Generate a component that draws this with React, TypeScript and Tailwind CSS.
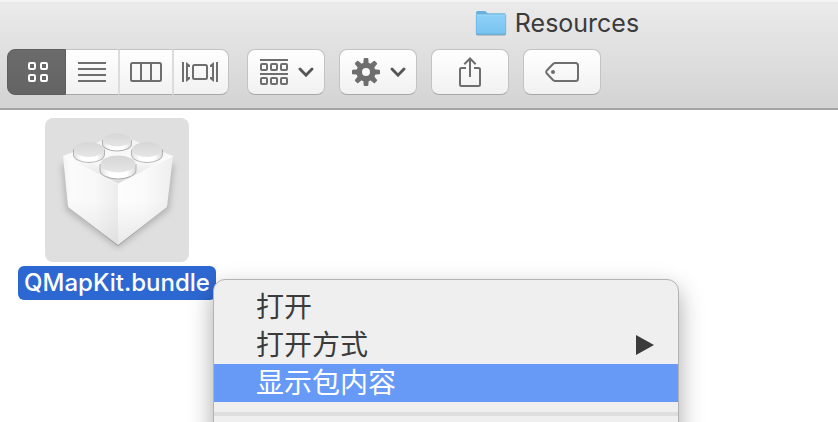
import type { ReactNode } from 'react'
import clsx from 'clsx'

const GRAY = '#6e6e6e'

function FolderIcon() {
  return (
    <svg width="32" height="26" viewBox="0 0 32 26" aria-hidden="true">
      <defs>
        <linearGradient id="folder" x1="0" y1="0" x2="0" y2="1">
          <stop offset="0" stopColor="#8dd0f8" />
          <stop offset="1" stopColor="#79c3f1" />
        </linearGradient>
      </defs>
      <path d="M2 25.200H30" stroke="#a9b4bb" />
      <path d="M1 2.500Q1 1 2.500 1H9.500Q10.500 1 11.200 1.800L12 2.800Q12.500 3.300 13.500 3.300H29.500Q31 3.300 31 4.800V24.500H1Z" fill="#68b1de" />
      <path d="M1 5.200H31V24H1Z" fill="url(#folder)" />
      <path d="M1 5H31" stroke="#a5def9" />
      <path d="M1 24.200H31" stroke="#5ba5d2" />
      <path d="M1.300 5V24M30.700 5V24" stroke="#67b4e2" strokeWidth=".7" />
    </svg>
  )
}

function GridIcon() {
  return (
    <svg width="20" height="20" viewBox="0 0 20 20" fill="none" stroke="#fff" strokeWidth="2" aria-hidden="true">
      {[1, 13].map(y => [1, 13].map(x => <rect key={`${x}-${y}`} x={x} y={y} width="6" height="6" rx="1.200" />))}
    </svg>
  )
}

function ListIcon() {
  return (
    <svg width="28" height="20" viewBox="0 0 28 20" stroke={GRAY} strokeWidth="2" aria-hidden="true">
      <path d="M0 1H28M0 7H28M0 13H28M0 19H28" />
    </svg>
  )
}

function ColumnsIcon() {
  return (
    <svg width="32" height="20" viewBox="0 0 32 20" fill="none" stroke={GRAY} strokeWidth="2" aria-hidden="true">
      <rect x="1" y="1" width="30" height="18" rx="1.500" />
      <path d="M11 1V19M21 1V19" />
    </svg>
  )
}

function CoverFlowIcon() {
  return (
    <svg width="36" height="20" viewBox="0 0 36 20" fill="none" stroke={GRAY} strokeWidth="2" aria-hidden="true">
      <path d="M1 0V20M35 0V20" />
      <rect x="11" y="3" width="14" height="14" rx="1.500" />
      <path d="M4 0L8 3V5H6V15H8V17L4 20ZM32 0L28 3V5H30V15H28V17L32 20Z" fill={GRAY} stroke="none" />
    </svg>
  )
}

function ArrangeIcon() {
  return (
    <svg width="28" height="26" viewBox="0 0 28 26" fill="none" stroke={GRAY} strokeWidth="2" aria-hidden="true">
      <path d="M0 1H28M0 15H28" />
      {[5, 19].map(y => [1, 11, 21].map(x => <rect key={`${x}-${y}`} x={x} y={y} width="6" height="6" rx="1" />))}
    </svg>
  )
}

function GearIcon() {
  return (
    <svg width="28" height="28" viewBox="0 0 28 28" aria-hidden="true">
      {[0, 45, 90, 135, 180, 225, 270, 315].map(a => (
        <path key={a} d="M11.200 7L11.700 .8Q11.800 0 12.600 0H15.400Q16.200 0 16.300 .8L16.800 7Z" fill={GRAY} transform={`rotate(${a} 14 14)`} />
      ))}
      <circle cx="14" cy="14" r="6.800" fill="none" stroke={GRAY} strokeWidth="5.600" />
    </svg>
  )
}

function ChevronIcon() {
  return (
    <svg width="16" height="10" viewBox="0 0 16 10" fill="none" stroke="#555" strokeWidth="2.800" strokeLinecap="round" aria-hidden="true">
      <path d="M2 2L8 8.200L14 2" />
    </svg>
  )
}

function ShareIcon() {
  return (
    <svg width="22" height="30" viewBox="0 0 22 30" fill="none" stroke={GRAY} strokeWidth="2" aria-hidden="true">
      <path d="M7 11H2.500Q1 11 1 12.500V27.500Q1 29 2.500 29H19.500Q21 29 21 27.500V12.500Q21 11 19.500 11H15" />
      <path d="M11 20V1.500M5.300 7.300L11 1.500L16.700 7.300" />
    </svg>
  )
}

function TagIcon() {
  return (
    <svg width="34" height="20" viewBox="0 0 34 20" fill="none" stroke={GRAY} strokeWidth="2" aria-hidden="true">
      <path d="M10.500 1H30.500Q33 1 33 3.500V16.500Q33 19 30.500 19H10.500Q9 19 8 18L1.800 11.500Q.6 10 1.800 8.500L8 2Q9 1 10.500 1Z" />
      <circle cx="8" cy="10" r="2" fill={GRAY} stroke="none" />
    </svg>
  )
}

function Stud({ cx, cy, rx, ry, depth }: { cx: number; cy: number; rx: number; ry: number; depth: number }) {
  const side = (grow: number, drop: number) => {
    const r = rx + grow
    return `M${cx - r} ${cy}V${cy + drop}A${r} ${ry + grow} 0 0 0 ${cx + r} ${cy + drop}V${cy}Z`
  }
  return (
    <g>
      <path d={side(1, depth)} fill="#9c9c9c" opacity=".75" filter="url(#soft)" />
      <path d={side(0, depth)} fill="url(#studSide)" />
      <ellipse cx={cx} cy={cy} rx={rx} ry={ry} fill="url(#studTop)" />
    </g>
  )
}

function BrickIcon() {
  return (
    <svg width="144" height="144" viewBox="0 0 144 144" aria-hidden="true">
      <defs>
        <filter id="soft" x="-20%" y="-20%" width="140%" height="140%"><feGaussianBlur stdDeviation=".6" /></filter>
        <filter id="shade" x="-20%" y="-20%" width="140%" height="140%"><feGaussianBlur stdDeviation="3" /></filter>
        <linearGradient id="studTop" x1="0" y1="0" x2="0" y2="1">
          <stop offset="0" stopColor="#d6d6d6" />
          <stop offset="1" stopColor="#e6e6e6" />
        </linearGradient>
        <linearGradient id="studSide">
          <stop offset="0" stopColor="#e2e2e2" />
          <stop offset=".25" stopColor="#fff" />
          <stop offset=".75" stopColor="#fff" />
          <stop offset="1" stopColor="#dcdcdc" />
        </linearGradient>
        <linearGradient id="top" x1="0" y1="0" x2="0" y2="1">
          <stop offset="0" stopColor="#f0f0f0" />
          <stop offset=".5" stopColor="#fbfbfb" />
          <stop offset="1" stopColor="#dadada" />
        </linearGradient>
        <linearGradient id="left">
          <stop offset="0" stopColor="#f3f3f3" />
          <stop offset=".15" stopColor="#fbfbfb" />
          <stop offset=".6" stopColor="#f8f8f8" />
          <stop offset="1" stopColor="#ededed" />
        </linearGradient>
        <linearGradient id="right">
          <stop offset="0" stopColor="#fdfdfd" />
          <stop offset=".5" stopColor="#fafafa" />
          <stop offset="1" stopColor="#eeeeee" />
        </linearGradient>
        <linearGradient id="foot" x1="0" y1="0" x2="0" y2="1">
          <stop offset=".5" stopColor="#d5d5d5" stopOpacity="0" />
          <stop offset="1" stopColor="#cfcfcf" stopOpacity=".45" />
        </linearGradient>
      </defs>
      <path d="M17 46L21 92L73 130L124 92L129 46Z" fill="#888" opacity=".5" filter="url(#shade)" />
      <path d="M22 88L73 128L123 88Z" fill="#777" opacity=".6" filter="url(#soft)" />
      <path d="M18 38L68 18Q73 16 78 18L128 38L73 66Z" fill="url(#top)" />
      <path d="M18 38L73 66V127L23 89Z" fill="url(#left)" />
      <path d="M128 38L73 66V127L122 89Z" fill="url(#right)" />
      <path d="M18 38L73 66L128 38L122 89L73 127L23 89Z" fill="url(#foot)" />
      <path d="M18 38L73 66L128 38" fill="none" stroke="#fff" strokeWidth=".8" />
      <Stud cx={72} cy={22} rx={14} ry={6.5} depth={4} />
      <Stud cx={44} cy={31.5} rx={15} ry={7.5} depth={5} />
      <Stud cx={102} cy={31.5} rx={15} ry={7.5} depth={5} />
      <Stud cx={73} cy={46} rx={17.5} ry={8.5} depth={6} />
    </svg>
  )
}

const idle = 'border-t-[#c3c3c3] border-b-[#a8a8a8] bg-linear-to-b from-white to-[#f1f1f1]'

const views = [
  { label: 'Icons', icon: <GridIcon />, className: 'w-[59px] rounded-l-lg border-x pl-0.5' },
  { label: 'List', icon: <ListIcon />, className: 'w-[52px]' },
  { label: 'Columns', icon: <ColumnsIcon />, className: 'w-[54px] border-l-2 border-l-[#dcdcdc]' },
  { label: 'Cover Flow', icon: <CoverFlowIcon />, className: 'w-[57px] rounded-r-lg border-l-2 border-r border-l-[#dcdcdc] border-r-[#c3c3c3] pr-0.5' },
]

function ViewSwitcher({ active }: { active: string }) {
  return (
    <div className="mr-1 flex h-[46px]">
      {views.map(v => (
        <button
          key={v.label}
          aria-label={v.label}
          aria-pressed={v.label === active}
          className={clsx(
            'flex items-center justify-center border-y',
            v.className,
            v.label === active ? 'border-[#5e5e5e] bg-linear-to-b from-[#6b6b6b] to-[#646464]' : idle,
          )}
        >
          {v.icon}
        </button>
      ))}
    </div>
  )
}

function ToolButton({ label, menu, children }: { label: string; menu?: boolean; children: ReactNode }) {
  return (
    <button
      aria-label={label}
      className={clsx('flex h-[46px] w-[78px] items-center justify-center gap-[10px] rounded-lg border border-x-[#c3c3c3]', idle, menu && 'pl-0.5')}
    >
      {children}
      {menu && <ChevronIcon />}
    </button>
  )
}

function MenuItem({ text, selected, submenu }: { text: string; selected?: boolean; submenu?: boolean }) {
  return (
    <button
      role="menuitem"
      className={clsx(
        'flex h-[38px] w-full items-center justify-between pr-6 pl-[42px] text-[28px] leading-[38px]',
        selected ? 'bg-[#6799f7] text-white' : 'text-[#3b3b3b]',
      )}
    >
      {text}
      {submenu && (
        <svg width="18" height="20" viewBox="0 0 18 20" aria-hidden="true">
          <path d="M0 0L18 10L0 20Z" fill="#3b3b3b" />
        </svg>
      )}
    </button>
  )
}

export default function App() {
  return (
    <div className="flex h-screen flex-col overflow-hidden bg-white font-[Inter,'Noto_Sans_CJK_SC',sans-serif]">
      <header className="border-t-2 border-b-2 border-t-[#f5f5f5] border-b-[#a3a3a3] bg-linear-to-b from-[#ebebeb] to-[#d3d3d3]">
        <div className="flex h-[47px] items-center justify-center gap-2 pb-1.5 pl-[276px]">
          <FolderIcon />
          <h1 className="text-[25px] leading-8 text-[#3b3b3b]">Resources</h1>
        </div>
        <div className="flex gap-[14px] px-[7px] pb-[13px]">
          <ViewSwitcher active="Icons" />
          <ToolButton label="Arrange" menu><ArrangeIcon /></ToolButton>
          <ToolButton label="Actions" menu><GearIcon /></ToolButton>
          <ToolButton label="Share"><ShareIcon /></ToolButton>
          <ToolButton label="Tags"><TagIcon /></ToolButton>
        </div>
      </header>

      <main className="relative flex-1 px-[18px] pt-2">
        <figure className="flex w-[198px] flex-col items-center gap-1">
          <div className="rounded-lg bg-[#dfdfdf]">
            <BrickIcon />
          </div>
          <figcaption className="w-full rounded-md bg-[#2d68d2] text-center text-[24px] leading-[34px] font-medium text-white">
            QMapKit.bundle
          </figcaption>
        </figure>

        <div
          role="menu"
          className="absolute top-[169px] left-[213px] w-[466px] rounded-t-xl border border-[#b3b3b3] bg-[#efefef] pt-2 pb-6 shadow-[0_10px_24px_rgba(0,0,0,0.35)]"
        >
          <MenuItem text="打开" />
          <MenuItem text="打开方式" submenu />
          <MenuItem text="显示包内容" selected />
          <hr className="mt-[10px] border-t-4 border-[#dedede]" />
        </div>
      </main>
    </div>
  )
}
